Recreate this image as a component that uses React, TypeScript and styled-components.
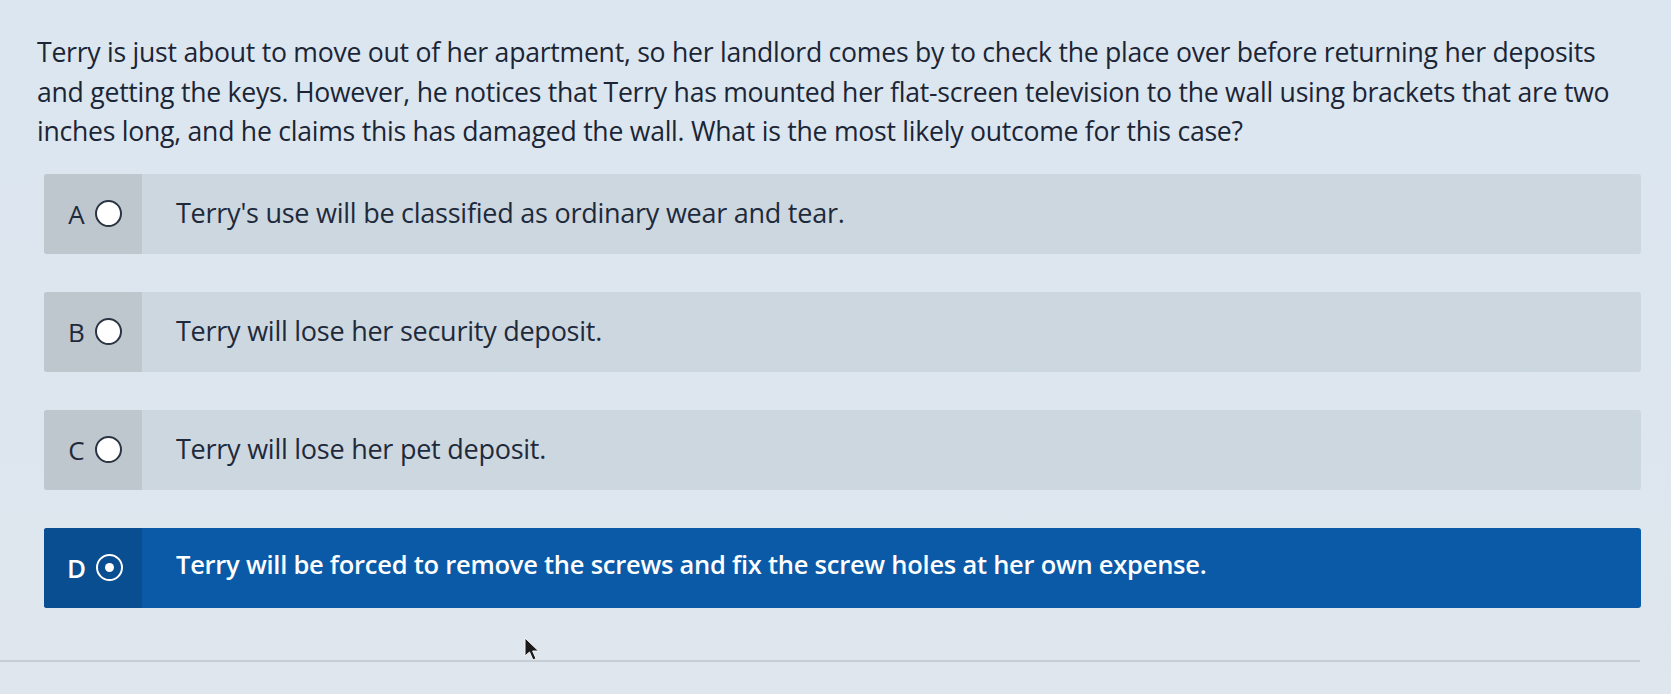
import React from "react";
import styled, { createGlobalStyle } from "styled-components";

const Global = createGlobalStyle`
  html, body {
    margin: 0;
    padding: 0;
    background: #dce5ee;
  }
  body {
    font-family: "Open Sans", "Noto Sans", "Liberation Sans", sans-serif;
    color: #1e2a3b;
  }
`;

const Page = styled.div`
  position: relative;
  width: 1671px;
  height: 694px;
  box-sizing: border-box;
  padding: 33px 0 0 37px;
  background: linear-gradient(180deg, #dce6f0 0%, #dde6ef 60%, #dfe6ed 100%);
  overflow: hidden;
`;

const Question = styled.p`
  margin: 0;
  width: 1600px;
  font-size: 26.6px;
  line-height: 39.5px;
  letter-spacing: -0.25px;
  color: #1b2535;
`;

const Options = styled.div`
  display: flex;
  flex-direction: column;
  gap: 38px;
  margin: 22px 0 0 7px;
  width: 1597px;
`;

const Option = styled.div<{ $selected?: boolean }>`
  display: flex;
  align-items: stretch;
  height: 80px;
  border-radius: 3px;
  overflow: hidden;
  background: ${(p) => (p.$selected ? "#0b5aa8" : "#cdd7e0")};
  color: ${(p) => (p.$selected ? "#ffffff" : "#1e2a3b")};
`;

const Label = styled.div<{ $selected?: boolean }>`
  width: 98px;
  flex: none;
  display: flex;
  align-items: center;
  justify-content: center;
  gap: 10px;
  padding-left: 4px;
  box-sizing: border-box;
  background: ${(p) => (p.$selected ? "#0a4e92" : "#bec6ce")};
  font-size: 26px;
  font-weight: ${(p) => (p.$selected ? 600 : 400)};
`;

const Radio = styled.span<{ $selected?: boolean }>`
  width: 27px;
  height: 27px;
  box-sizing: border-box;
  border-radius: 50%;
  border: 2px solid ${(p) => (p.$selected ? "#ffffff" : "#2a3442")};
  background: ${(p) => (p.$selected ? "transparent" : "#ffffff")};
  display: flex;
  align-items: center;
  justify-content: center;
  &::after {
    content: "";
    display: ${(p) => (p.$selected ? "block" : "none")};
    width: 9px;
    height: 9px;
    border-radius: 50%;
    background: #ffffff;
  }
`;

const Text = styled.div<{ $selected?: boolean }>`
  display: flex;
  align-items: center;
  padding-left: 34px;
  font-size: ${(p) => (p.$selected ? "25.5px" : "27px")};
  font-weight: ${(p) => (p.$selected ? 600 : 400)};
  letter-spacing: -0.25px;
  padding-bottom: ${(p) => (p.$selected ? "8px" : "2px")};
`;

const Rule = styled.div`
  margin: 52px 0 0 -37px;
  width: 1640px;
  height: 2px;
  background: #c6cdd4;
`;

const Cursor = styled.svg`
  position: absolute;
  left: 524px;
  top: 637px;
`;

const options = [
  { key: "A", text: "Terry's use will be classified as ordinary wear and tear." },
  { key: "B", text: "Terry will lose her security deposit." },
  { key: "C", text: "Terry will lose her pet deposit." },
  {
    key: "D",
    text: "Terry will be forced to remove the screws and fix the screw holes at her own expense.",
    selected: true,
  },
];

export default function App() {
  return (
    <>
      <Global />
      <Page>
        <Question>
          Terry is just about to move out of her apartment, so her landlord comes by to check the place over
          before returning her deposits and getting the keys. However, he notices that Terry has mounted her
          flat-screen television to the wall using brackets that are two inches long, and he claims this has
          damaged the wall. What is the most likely outcome for this case?
        </Question>
        <Options>
          {options.map((o) => (
            <Option key={o.key} $selected={o.selected}>
              <Label $selected={o.selected}>
                {o.key}
                <Radio $selected={o.selected} />
              </Label>
              <Text $selected={o.selected}>{o.text}</Text>
            </Option>
          ))}
        </Options>
        <Rule />
        <Cursor width="18" height="26" viewBox="0 0 18 26">
          <path d="M1 1 L1 19 L5.5 15 L9 23 L12 21.6 L8.6 14 L14.5 14 Z" fill="#1a1a1a" stroke="#f4f4f4" strokeWidth="1" />
        </Cursor>
      </Page>
    </>
  );
}
